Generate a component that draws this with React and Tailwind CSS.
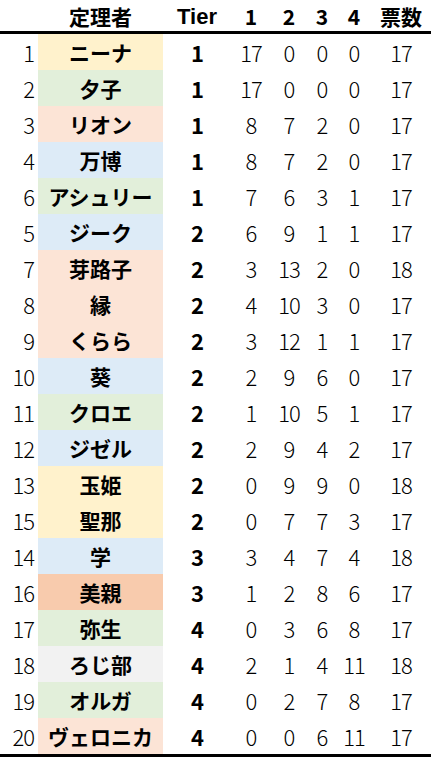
import React from "react";

const colors = {
  y: "bg-[#fff2cc]",
  g: "bg-[#e2efda]",
  p: "bg-[#fce4d6]",
  b: "bg-[#ddebf7]",
  o: "bg-[#f8cbad]",
  s: "bg-[#f2f2f2]",
};

const rows = [
  [1, "ニーナ", "y", 1, 17, 0, 0, 0, 17],
  [2, "夕子", "g", 1, 17, 0, 0, 0, 17],
  [3, "リオン", "p", 1, 8, 7, 2, 0, 17],
  [4, "万博", "b", 1, 8, 7, 2, 0, 17],
  [6, "アシュリー", "g", 1, 7, 6, 3, 1, 17],
  [5, "ジーク", "b", 2, 6, 9, 1, 1, 17],
  [7, "芽路子", "p", 2, 3, 13, 2, 0, 18],
  [8, "縁", "p", 2, 4, 10, 3, 0, 17],
  [9, "くらら", "p", 2, 3, 12, 1, 1, 17],
  [10, "葵", "b", 2, 2, 9, 6, 0, 17],
  [11, "クロエ", "g", 2, 1, 10, 5, 1, 17],
  [12, "ジゼル", "b", 2, 2, 9, 4, 2, 17],
  [13, "玉姫", "y", 2, 0, 9, 9, 0, 18],
  [15, "聖那", "y", 2, 0, 7, 7, 3, 17],
  [14, "学", "b", 3, 3, 4, 7, 4, 18],
  [16, "美親", "o", 3, 1, 2, 8, 6, 17],
  [17, "弥生", "g", 4, 0, 3, 6, 8, 17],
  [18, "ろじ部", "s", 4, 2, 1, 4, 11, 18],
  [19, "オルガ", "g", 4, 0, 2, 7, 8, 17],
  [20, "ヴェロニカ", "p", 4, 0, 0, 6, 11, 17],
];

const cols = "grid grid-cols-[38px_125px_68px_40px_36px_30px_34px_60px]";

export default function App() {
  return (
    <div className="w-[431px] h-[761px] bg-white text-black font-['Noto_Sans_CJK_JP',sans-serif]">
      {/* header */}
      <div className={`${cols} h-[34px] items-center text-[21px] font-bold border-b-[3px] border-black`}>
        <div />
        <div className="text-center">定理者</div>
        <div className="text-center text-[22px] font-semibold font-['Liberation_Sans',sans-serif]">Tier</div>
        <div className="text-center">1</div>
        <div className="text-center">2</div>
        <div className="text-center">3</div>
        <div className="text-center">4</div>
        <div className="text-center">票数</div>
      </div>

      <div className="border-b-[3px] border-black">
        {rows.map(([no, name, c, tier, a, b, d, e, total]) => (
          <div key={no} className={`${cols} h-[36px] items-center text-[22px] leading-none font-light tracking-[-1px]`}>
            <div className="text-right pr-[4px]">{no}</div>
            <div className={`${colors[c]} h-full flex items-center justify-center text-[21px] font-bold tracking-normal`}>
              {name}
            </div>
            <div className="text-center font-bold">{tier}</div>
            <div className="text-center">{a}</div>
            <div className="text-center">{b}</div>
            <div className="text-center">{d}</div>
            <div className="text-center">{e}</div>
            <div className="text-center">{total}</div>
          </div>
        ))}
      </div>
    </div>
  );
}
